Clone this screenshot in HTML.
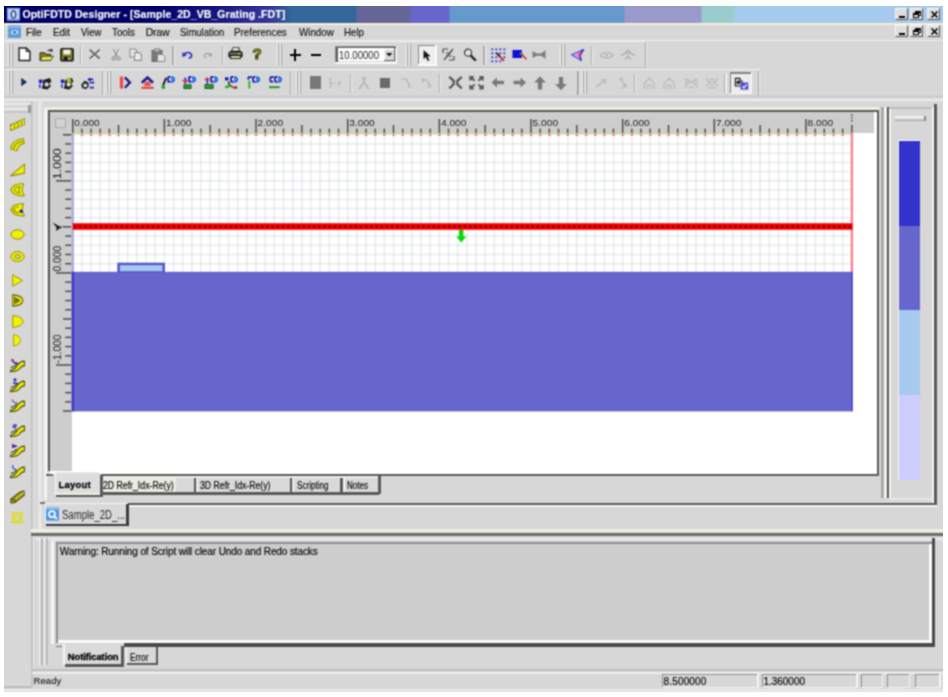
<!DOCTYPE html>
<html>
<head>
<meta charset="utf-8">
<title>OptiFDTD Designer</title>
<style>
html,body{margin:0;padding:0;}
body{width:948px;height:697px;background:#fff;overflow:hidden;position:relative;font-family:"Liberation Sans",sans-serif;font-size:10.5px;color:#111;}
.a{position:absolute;}
svg{position:absolute;overflow:visible;}
.wb{width:13px;height:12px;background:#dedede;box-sizing:border-box;border:1px solid;border-color:#fbf7ee #555 #555 #fbf7ee;}
.grip{width:2px;background:#f6f6f2;border-right:1px solid #8c8c8c;}
</style>
</head>
<body>
<svg width="0" height="0" style="position:absolute"><defs><filter id="soft" x="0" y="0" width="100%" height="100%" color-interpolation-filters="sRGB"><feConvolveMatrix order="3" kernelMatrix="1 2 1 2 5 2 1 2 1" divisor="17" edgeMode="duplicate" preserveAlpha="true"/></filter></defs></svg>
<div id="all" class="a" style="left:0;top:0;width:948px;height:697px;filter:url(#soft)">
<div class="a" style="left:0.0px;top:0.0px;width:948.0px;height:697.0px;background:#d7d7d7;"></div>
<div class="a" style="left:0px;top:0px;width:948px;height:22.5px;background:linear-gradient(to right,#000068 0px,#000068 150px,#14147c 215px,#2c2c94 250px,#333399 268px,#336699 292px,#336699 356px,#666699 357px,#666699 410px,#6666cc 411px,#6666cc 449px,#6699cc 450px,#6699cc 624px,#9999cc 625px,#9999cc 701px,#99cccc 702px,#99cccc 734px,#a6caf0 735px,#a6caf0 948px);"></div>
<div class="a" style="left:0.0px;top:22.9px;width:948.0px;height:1.9px;background:#f6eedc;"></div>
<span class="a" style="left:22.4px;top:7.4px;font-size:10.5px;line-height:14px;letter-spacing:0.07px;white-space:nowrap;color:#fff;-webkit-text-stroke:0.15px #fff;font-weight:bold;">OptiFDTD Designer - [Sample_2D_VB_Grating .FDT]</span>
<svg class="a" style="left:7px;top:8px" width="13" height="13" viewBox="0 0 13 13"><rect x="0" y="0" width="13" height="13" fill="#9cc4ea"/><rect x="1" y="1" width="11" height="11" fill="#c8def2" stroke="#7aa7d6" stroke-width="1"/><ellipse cx="6.5" cy="6.5" rx="2.3" ry="3.6" fill="none" stroke="#2a3f9a" stroke-width="1.4"/><rect x="0" y="11" width="13" height="2" fill="#6a58a8" opacity=".6"/></svg>
<svg class="a" style="left:8px;top:25px" width="13" height="13" viewBox="0 0 13 13"><rect x="0" y="0" width="13" height="13" fill="#5f9ede"/><rect x="0" y="0" width="13" height="3" fill="#86b6ea"/><path d="M3 7.5 C4 4.5 8 4 10.5 7 C9 10 5 10.5 3 7.5Z" fill="#e6eef8"/><circle cx="6.6" cy="7.2" r="1.7" fill="#2e86d0"/></svg>
<span class="a" style="left:26.4px;top:24.6px;font-size:10.5px;line-height:14px;letter-spacing:0.00px;white-space:nowrap;color:#111;-webkit-text-stroke:0.15px #111;transform:scaleX(0.9221);transform-origin:0 50%;">File</span>
<span class="a" style="left:52.9px;top:24.6px;font-size:10.5px;line-height:14px;letter-spacing:0.00px;white-space:nowrap;color:#111;-webkit-text-stroke:0.15px #111;transform:scaleX(0.9341);transform-origin:0 50%;">Edit</span>
<span class="a" style="left:80.8px;top:24.6px;font-size:10.5px;line-height:14px;letter-spacing:0.00px;white-space:nowrap;color:#111;-webkit-text-stroke:0.15px #111;transform:scaleX(0.8950);transform-origin:0 50%;">View</span>
<span class="a" style="left:112.0px;top:24.6px;font-size:10.5px;line-height:14px;letter-spacing:0.00px;white-space:nowrap;color:#111;-webkit-text-stroke:0.15px #111;transform:scaleX(0.9302);transform-origin:0 50%;">Tools</span>
<span class="a" style="left:145.7px;top:24.6px;font-size:10.5px;line-height:14px;letter-spacing:-0.20px;white-space:nowrap;color:#111;-webkit-text-stroke:0.15px #111;">Draw</span>
<span class="a" style="left:179.5px;top:24.6px;font-size:10.5px;line-height:14px;letter-spacing:0.00px;white-space:nowrap;color:#111;-webkit-text-stroke:0.15px #111;transform:scaleX(0.9037);transform-origin:0 50%;">Simulation</span>
<span class="a" style="left:234.3px;top:24.6px;font-size:10.5px;line-height:14px;letter-spacing:0.00px;white-space:nowrap;color:#111;-webkit-text-stroke:0.15px #111;transform:scaleX(0.9309);transform-origin:0 50%;">Preferences</span>
<span class="a" style="left:298.7px;top:24.6px;font-size:10.5px;line-height:14px;letter-spacing:0.00px;white-space:nowrap;color:#111;-webkit-text-stroke:0.15px #111;transform:scaleX(0.9319);transform-origin:0 50%;">Window</span>
<span class="a" style="left:344.0px;top:24.6px;font-size:10.5px;line-height:14px;letter-spacing:0.00px;white-space:nowrap;color:#111;-webkit-text-stroke:0.15px #111;transform:scaleX(0.9262);transform-origin:0 50%;">Help</span>
<div class="a wb" style="left:895px;top:8px"><i class="a" style="left:3px;top:7px;width:6px;height:2px;background:#000"></i></div>
<div class="a wb" style="left:910px;top:8px"><i class="a" style="left:4px;top:1.5px;width:6px;height:5px;border:1px solid #000;border-top-width:2px;box-sizing:border-box"></i><i class="a" style="left:2px;top:4px;width:6px;height:5px;border:1px solid #000;border-top-width:2px;box-sizing:border-box;background:#e8e8e8"></i></div>
<div class="a wb" style="left:927px;top:8px"><svg style="left:2.5px;top:2px" width="7" height="7" viewBox="0 0 7 7"><path d="M0.5 0.5L6.5 6.5M6.5 0.5L0.5 6.5" stroke="#000" stroke-width="1.6"/></svg></div>
<div class="a wb" style="left:895px;top:25px"><i class="a" style="left:3px;top:7px;width:6px;height:2px;background:#000"></i></div>
<div class="a wb" style="left:910px;top:25px"><i class="a" style="left:4px;top:1.5px;width:6px;height:5px;border:1px solid #000;border-top-width:2px;box-sizing:border-box"></i><i class="a" style="left:2px;top:4px;width:6px;height:5px;border:1px solid #000;border-top-width:2px;box-sizing:border-box;background:#e8e8e8"></i></div>
<div class="a wb" style="left:927px;top:25px"><svg style="left:2.5px;top:2px" width="7" height="7" viewBox="0 0 7 7"><path d="M0.5 0.5L6.5 6.5M6.5 0.5L0.5 6.5" stroke="#000" stroke-width="1.6"/></svg></div>
<div class="a" style="left:0.0px;top:39.5px;width:948.0px;height:1.5px;background:#ebebeb;"></div>
<div class="a" style="left:4.0px;top:40.6px;width:641.0px;height:1.4px;background:#efefef;"></div>
<div class="a" style="left:4.0px;top:66.6px;width:643.0px;height:1.4px;background:#c6c6c6;"></div>
<div class="a" style="left:4.0px;top:68.6px;width:756.0px;height:1.6px;background:#f0f0f0;"></div>
<div class="a" style="left:7.8px;top:43.7px;width:1.2px;height:22.1px;background:#fafaf6;"></div>
<div class="a" style="left:9.0px;top:43.7px;width:1.0px;height:22.1px;background:#9a9a9a;"></div>
<div class="a" style="left:10.8px;top:43.7px;width:1.2px;height:22.1px;background:#fafaf6;"></div>
<div class="a" style="left:12.0px;top:43.7px;width:1.0px;height:22.1px;background:#9a9a9a;"></div>
<svg class="a" style="left:18.2px;top:47.2px" width="13.0" height="14.5" viewBox="0 0 14 16"><path d="M1 1 L9 1 L13 5 L13 15 L1 15Z" fill="#fff" stroke="#222" stroke-width="1.6"/><path d="M9 1 L9 5 L13 5" fill="none" stroke="#222" stroke-width="1.3"/></svg>
<svg class="a" style="left:38.5px;top:47.5px" width="15.5" height="13.5" viewBox="0 0 16 14"><path d="M1 5 L6 5 L7 6.5 L12 6.5 L12 13 L1 13Z" fill="#8a8a20" stroke="#222" stroke-width="1"/><path d="M3.5 8.5 L15 8.5 L12 13 L1 13Z" fill="#e4e43c" stroke="#333" stroke-width="0.9"/><path d="M9 3.5 C10 1.5 12 1.2 13.2 2.6 M13.6 1 L13.4 3.2 L11.4 3" stroke="#222" stroke-width="1.1" fill="none"/></svg>
<svg class="a" style="left:59.5px;top:47.9px" width="14.0" height="13.6" viewBox="0 0 14 14"><rect x="0.8" y="0.8" width="12.4" height="12.4" rx="1" fill="#84841c" stroke="#111" stroke-width="1.6"/><rect x="3.3" y="1.6" width="7.2" height="5" fill="#f2f2f2"/><rect x="3.6" y="8.8" width="6.6" height="4" fill="#1a1a1a"/><rect x="8" y="9.6" width="1.6" height="2.6" fill="#f0f0f0"/></svg>
<div class="a" style="left:80.0px;top:46.0px;width:1.2px;height:19.0px;background:#adadad;"></div>
<div class="a" style="left:81.2px;top:46.0px;width:1.2px;height:19.0px;background:#f0f0ee;"></div>
<svg class="a" style="left:88.6px;top:49.2px" width="12.0" height="11.0" viewBox="0 0 12 11"><path d="M1.6 1.6 L11.6 10.6 M11.6 1.6 L1.6 10.6" stroke="#fff" stroke-width="1.5"/><path d="M0.8 0.8 L10.8 9.8 M10.8 0.8 L0.8 9.8" stroke="#6c6c6c" stroke-width="1.9"/></svg>
<svg class="a" style="left:110.8px;top:48.2px" width="10.5" height="13.0" viewBox="0 0 11 13"><path d="M2.6 1 L7 9 M8.4 1 L4 9" stroke="#fff" stroke-width="1.2" transform="translate(.8 .8)"/><path d="M2.6 1 L7 9 M8.4 1 L4 9" stroke="#8a8a8a" stroke-width="1.2"/><circle cx="3" cy="10.6" r="1.7" fill="none" stroke="#8a8a8a" stroke-width="1.1"/><circle cx="8" cy="10.6" r="1.7" fill="none" stroke="#8a8a8a" stroke-width="1.1"/></svg>
<svg class="a" style="left:129.0px;top:48.2px" width="13.0" height="13.0" viewBox="0 0 13 13"><path d="M1 1 L6 1 L8 3 L8 9 L1 9Z" fill="#e6e6e6" stroke="#8c8c8c" stroke-width="1.1"/><path d="M5.6 4.6 L10.4 4.6 L12.4 6.6 L12.4 12.4 L5.6 12.4Z" fill="#ededed" stroke="#8c8c8c" stroke-width="1.1"/></svg>
<svg class="a" style="left:150.5px;top:47.7px" width="15.0" height="14.0" viewBox="0 0 15 14"><rect x="1" y="2.4" width="10" height="11" fill="#787878" stroke="#6a6a6a"/><rect x="3.6" y="0.8" width="4.8" height="3" fill="#bdbdbd" stroke="#7c7c7c" stroke-width=".8"/><path d="M6.6 6.4 L11.6 6.4 L13.8 8.6 L13.8 13.4 L6.6 13.4Z" fill="#e8e8e8" stroke="#8a8a8a" stroke-width="1"/></svg>
<div class="a" style="left:172.4px;top:46.0px;width:1.2px;height:19.0px;background:#adadad;"></div>
<div class="a" style="left:173.6px;top:46.0px;width:1.2px;height:19.0px;background:#f0f0ee;"></div>
<svg class="a" style="left:180.6px;top:51.4px" width="12.5" height="7.6" viewBox="0 0 13 9"><path d="M2.5 4.2 C5 0.6 11.4 1 11.6 5.4 C11.6 7.4 10 8.4 8.2 8.4" fill="none" stroke="#2a2ab8" stroke-width="1.9"/><path d="M0.4 1.4 L1 7 L6.2 5Z" fill="#2a2ab8"/></svg>
<svg class="a" style="left:201.7px;top:52.0px" width="11.5" height="6.4" viewBox="0 0 12 9"><path d="M9.6 4.2 C7.4 1 1.4 1.2 1.2 5.2 C1.2 7 2.6 8 4.2 8" fill="none" stroke="#9a9a9a" stroke-width="1.5"/><path d="M11.7 1.4 L11.2 6.8 L6.4 4.8Z" fill="#9a9a9a"/></svg>
<div class="a" style="left:222.0px;top:46.0px;width:1.2px;height:19.0px;background:#adadad;"></div>
<div class="a" style="left:223.2px;top:46.0px;width:1.2px;height:19.0px;background:#f0f0ee;"></div>
<svg class="a" style="left:228.4px;top:47.4px" width="15.5" height="12.5" viewBox="0 0 17 14"><path d="M4 5 L5.2 0.8 L12.6 0.8 L11.6 5Z" fill="#f4f4f4" stroke="#222" stroke-width="1"/><path d="M0.8 6.4 L3 4.6 L14 4.6 L15.6 6.4 L15.6 11 L0.8 11Z" fill="#3a3a34" stroke="#111" stroke-width="1.1"/><path d="M2 7.4 H12" stroke="#9a9a8a" stroke-width="1"/><rect x="2.6" y="9.6" width="11" height="3.4" fill="#d8d4a8" stroke="#111" stroke-width="1"/><rect x="11.4" y="6.8" width="2.4" height="1.5" fill="#e8e040"/></svg>
<span class="a" style="left:252.4px;top:45.4px;font-size:15px;line-height:18px;font-weight:bold;color:#e4e410;-webkit-text-stroke:1px #2a2a08;">?</span>
<div class="a" style="left:277.0px;top:43.7px;width:1.2px;height:22.1px;background:#fafaf6;"></div>
<div class="a" style="left:278.2px;top:43.7px;width:1.0px;height:22.1px;background:#9a9a9a;"></div>
<div class="a" style="left:280.0px;top:43.7px;width:1.2px;height:22.1px;background:#fafaf6;"></div>
<div class="a" style="left:281.2px;top:43.7px;width:1.0px;height:22.1px;background:#9a9a9a;"></div>
<div class="a" style="left:289.6px;top:53.6px;width:11.4px;height:2.4px;background:#000;"></div>
<div class="a" style="left:294.1px;top:49.0px;width:2.4px;height:11.6px;background:#000;"></div>
<div class="a" style="left:311.0px;top:53.6px;width:10.0px;height:2.4px;background:#000;"></div>
<div class="a" style="left:335.0px;top:45.6px;width:62.0px;height:18.0px;background:#f8f8f4;"></div>
<div class="a" style="left:335.0px;top:45.6px;width:60.8px;height:16.8px;background:#8c8c8c;"></div>
<div class="a" style="left:336.3px;top:46.9px;width:59.5px;height:15.5px;background:#606060;"></div>
<div class="a" style="left:337.6px;top:48.2px;width:58.2px;height:14.2px;background:#d7d7d7;"></div>
<div class="a" style="left:337.6px;top:48.2px;width:57.2px;height:13.2px;background:#fff;"></div>
<span class="a" style="left:338.6px;top:47.8px;font-size:10.5px;line-height:14px;letter-spacing:0.00px;white-space:nowrap;color:#222;-webkit-text-stroke:0px #222;transform:scaleX(0.9134);transform-origin:0 50%;">10.00000</span>
<div class="a" style="left:383.6px;top:48.4px;width:11.2px;height:13.0px;background:#d9d9d9;"></div>
<div class="a" style="left:383.6px;top:48.4px;width:10.4px;height:1.2px;background:#f8f8f4;"></div>
<div class="a" style="left:383.6px;top:48.4px;width:1.2px;height:12.6px;background:#f8f8f4;"></div>
<div class="a" style="left:393.6px;top:48.4px;width:1.2px;height:13.0px;background:#666;"></div>
<div class="a" style="left:383.6px;top:60.2px;width:11.2px;height:1.2px;background:#666;"></div>
<svg class="a" style="left:386px;top:53.2px" width="6.4" height="3.6" viewBox="0 0 7 4"><path d="M0 0 L7 0 L3.5 4Z" fill="#111"/></svg>
<div class="a" style="left:406.0px;top:43.7px;width:1.2px;height:22.1px;background:#fafaf6;"></div>
<div class="a" style="left:407.2px;top:43.7px;width:1.0px;height:22.1px;background:#9a9a9a;"></div>
<div class="a" style="left:409.0px;top:43.7px;width:1.2px;height:22.1px;background:#fafaf6;"></div>
<div class="a" style="left:410.2px;top:43.7px;width:1.0px;height:22.1px;background:#9a9a9a;"></div>
<div class="a" style="left:417.5px;top:44.6px;width:19.3px;height:21.0px;background:#fbfbf8;"></div>
<div class="a" style="left:417.5px;top:44.6px;width:17.9px;height:19.6px;background:#8a8a8a;"></div>
<div class="a" style="left:418.8px;top:45.9px;width:16.6px;height:18.3px;background:#efefef;"></div>
<svg class="a" style="left:423.4px;top:48.9px" width="8.5" height="13.0" viewBox="0 0 9 13"><path d="M0.6 0.6 L0.6 10.4 L3 8.2 L5 12.4 L6.8 11.6 L4.8 7.6 L8 7.4Z" fill="#111"/></svg>
<svg class="a" style="left:441.5px;top:48.1px" width="13.0" height="13.0" viewBox="0 0 13 13"><path d="M1 1 H6 M1 1 V5 M12 12 H7 M12 12 V8 M2 12 L11 1 M4 5 H9 M4 8 H10" stroke="#4a4a4a" stroke-width="1.2" fill="none"/></svg>
<svg class="a" style="left:463.0px;top:48.0px" width="14.0" height="13.6" viewBox="0 0 14 14"><circle cx="5" cy="4.8" r="3.6" fill="#dfe6ee" stroke="#3a3a3a" stroke-width="1.3"/><path d="M7.6 7.6 L13 13" stroke="#222" stroke-width="2.4"/></svg>
<div class="a" style="left:483.4px;top:46.0px;width:1.2px;height:19.0px;background:#adadad;"></div>
<div class="a" style="left:484.6px;top:46.0px;width:1.2px;height:19.0px;background:#f0f0ee;"></div>
<svg class="a" style="left:490.5px;top:47.8px" width="14.0" height="14.0" viewBox="0 0 14 14"><rect x="0.4" y="0.4" width="1.8" height="1.8" fill="#3030d0"/><rect x="0.4" y="4.4" width="1.8" height="1.8" fill="#3030d0"/><rect x="0.4" y="8.4" width="1.8" height="1.8" fill="#3030d0"/><rect x="0.4" y="12.4" width="1.8" height="1.8" fill="#3030d0"/><rect x="4.4" y="0.4" width="1.8" height="1.8" fill="#3030d0"/><rect x="4.4" y="4.4" width="1.8" height="1.8" fill="#3030d0"/><rect x="4.4" y="8.4" width="1.8" height="1.8" fill="#3030d0"/><rect x="4.4" y="12.4" width="1.8" height="1.8" fill="#3030d0"/><rect x="8.4" y="0.4" width="1.8" height="1.8" fill="#3030d0"/><rect x="8.4" y="4.4" width="1.8" height="1.8" fill="#3030d0"/><rect x="8.4" y="12.4" width="1.8" height="1.8" fill="#3030d0"/><rect x="12.4" y="0.4" width="1.8" height="1.8" fill="#3030d0"/><rect x="12.4" y="4.4" width="1.8" height="1.8" fill="#3030d0"/><rect x="12.4" y="8.4" width="1.8" height="1.8" fill="#3030d0"/><path d="M6.4 6 L13 12.8" stroke="#d02020" stroke-width="1.8"/><path d="M5.4 4.8 L8.8 8.4" stroke="#222" stroke-width="1.6"/></svg>
<svg class="a" style="left:511.8px;top:48.6px" width="15.5" height="11.5" viewBox="0 0 16 12"><rect x="0.4" y="1" width="9.8" height="8.4" fill="#1010d8"/><circle cx="9.4" cy="5" r="1.6" fill="#20a040"/><path d="M10 5.4 L15 10.6" stroke="#d02020" stroke-width="1.6"/></svg>
<svg class="a" style="left:531.8px;top:48.9px" width="14.5" height="11.0" viewBox="0 0 15 11"><path d="M0.6 2 L5 4.4 L9.6 4.4 L14 0.8 L14 10.2 L9.6 6.8 L5 6.8 L0.6 9Z" fill="#7c7c7c"/></svg>
<div class="a" style="left:560.0px;top:43.7px;width:1.2px;height:22.1px;background:#fafaf6;"></div>
<div class="a" style="left:561.2px;top:43.7px;width:1.0px;height:22.1px;background:#9a9a9a;"></div>
<div class="a" style="left:563.0px;top:43.7px;width:1.2px;height:22.1px;background:#fafaf6;"></div>
<div class="a" style="left:564.2px;top:43.7px;width:1.0px;height:22.1px;background:#9a9a9a;"></div>
<svg class="a" style="left:570.6px;top:48.9px" width="13.5" height="12.6" viewBox="0 0 14 13"><path d="M0.6 6 L13 0.6 L9 6.4 L10.6 12 Z" fill="#e69ad8" stroke="#4a4ad8" stroke-width="1.1" stroke-linejoin="round"/><path d="M13 0.6 L9 6.4 L10.6 12" fill="none" stroke="#3838d0" stroke-width="1.8"/><circle cx="9.4" cy="5.6" r="1.5" fill="#e03030"/></svg>
<div class="a" style="left:591.0px;top:46.0px;width:1.2px;height:19.0px;background:#adadad;"></div>
<div class="a" style="left:592.2px;top:46.0px;width:1.2px;height:19.0px;background:#f0f0ee;"></div>
<svg class="a" style="left:599.2px;top:50.5px" width="15.5" height="8.5" viewBox="0 0 16 9"><path d="M1 5 C4 0.6 11.6 0.6 14.6 5 C11.6 8 4 8 1 5Z" fill="none" stroke="#b4b4b4" stroke-width="1.5"/><circle cx="7.8" cy="4.6" r="1.5" fill="#b4b4b4"/></svg>
<svg class="a" style="left:620.0px;top:49.1px" width="16.0" height="11.0" viewBox="0 0 16 11"><path d="M1 7 C4 3 12 3 15 7 M8 0.8 L4 5.2 M8 0.8 L12 5.2 M5 10.4 L8 7 L11 10.4" fill="none" stroke="#b4b4b4" stroke-width="1.5"/></svg>
<div class="a" style="left:644.6px;top:43.0px;width:1.2px;height:24.4px;background:#a6a6a6;"></div>
<div class="a" style="left:645.8px;top:43.0px;width:1.2px;height:24.4px;background:#ececec;"></div>
<div class="a" style="left:7.8px;top:71.0px;width:1.2px;height:23.3px;background:#fafaf6;"></div>
<div class="a" style="left:9.0px;top:71.0px;width:1.0px;height:23.3px;background:#9a9a9a;"></div>
<div class="a" style="left:10.8px;top:71.0px;width:1.2px;height:23.3px;background:#fafaf6;"></div>
<div class="a" style="left:12.0px;top:71.0px;width:1.0px;height:23.3px;background:#9a9a9a;"></div>
<svg class="a" style="left:21.3px;top:78.4px" width="6.2" height="8.6" viewBox="0 0 6 9"><path d="M0 0 L6 4.3 L0 8.6Z" fill="#14146e"/><path d="M0 1.6 L2.4 4.3 L0 7Z" fill="#1a7a4a"/></svg>
<svg class="a" style="left:38.4px;top:76.5px" width="14.5" height="13.0" viewBox="0 0 14 13"><path d="M5 3 L11.6 1 L13.2 4.4 L11 6.4 L12.6 9.2 L9 12.6 L3.4 11.4 L4.6 8 Z" fill="#1c1c1c"/><circle cx="8.4" cy="7.4" r="2.2" fill="#cfd6ee"/><rect x="0.6" y="2.6" width="3.6" height="3.4" fill="#1a1ac0"/><path d="M1.6 7 V11" stroke="#3a3ad8" stroke-width="1.6"/></svg>
<svg class="a" style="left:59.5px;top:76.5px" width="14.5" height="13.0" viewBox="0 0 14 13"><path d="M5 3 L11.6 1 L13.2 4.4 L11 6.4 L12.6 9.2 L9 12.6 L3.4 11.4 L4.6 8 Z" fill="#1c1c1c"/><circle cx="8.4" cy="7.4" r="2.2" fill="#cfd6ee"/><rect x="0.6" y="2.6" width="3.6" height="3.4" fill="#1a1ac0"/><path d="M1.6 7 V11" stroke="#3a3ad8" stroke-width="1.6"/><path d="M6 1.4 L10 0.6 L11.4 5 L7 6.6Z" fill="#b4b42a"/></svg>
<svg class="a" style="left:79.8px;top:76.5px" width="14.5" height="13.0" viewBox="0 0 14 13"><path d="M1 7.6 L4.6 3.4 L8 5.4 L8.6 9.4 L5.6 12.2 L1.8 11Z" fill="#222"/><circle cx="5" cy="8.4" r="1.9" fill="#d8d8e8"/><path d="M7.6 2.4 H13 M9.2 5.6 H14 M9.6 10.6 H13.6 M9.4 1 V4" stroke="#2020b8" stroke-width="1.8"/></svg>
<div class="a" style="left:102.0px;top:71.0px;width:1.2px;height:23.5px;background:#a6a6a6;"></div>
<div class="a" style="left:103.2px;top:71.0px;width:1.2px;height:23.5px;background:#ececec;"></div>
<div class="a" style="left:105.7px;top:71.0px;width:1.2px;height:23.3px;background:#fafaf6;"></div>
<div class="a" style="left:106.9px;top:71.0px;width:1.0px;height:23.3px;background:#9a9a9a;"></div>
<div class="a" style="left:108.7px;top:71.0px;width:1.2px;height:23.3px;background:#fafaf6;"></div>
<div class="a" style="left:109.9px;top:71.0px;width:1.0px;height:23.3px;background:#9a9a9a;"></div>
<svg class="a" style="left:119.2px;top:75.7px" width="14.5" height="13.5" viewBox="0 0 14 14"><rect x="0.4" y="0.6" width="3.4" height="12.4" fill="#f04848"/><path d="M5.6 1.4 L10.8 6.8 L5.6 12.2" fill="none" stroke="#1c1c8c" stroke-width="2.5"/></svg>
<svg class="a" style="left:139.8px;top:75.7px" width="14.5" height="13.5" viewBox="0 0 14 14"><path d="M1.4 7 L7.2 1.6 L13 7" fill="none" stroke="#1c1c8c" stroke-width="2.8"/><path d="M4 9 H10.4 M1 12.2 H13.6" stroke="#e83838" stroke-width="2.2"/><path d="M4.6 6.8 H10" stroke="#e83838" stroke-width="1.6"/></svg>
<svg class="a" style="left:160.8px;top:75.8px" width="14.5" height="13.5" viewBox="0 0 15 14"><rect x="6.4" y="0.4" width="8.4" height="6.6" rx="1.5" fill="#e8f6ff"/><path d="M7 1 H9.8 M7.4 1 V6 M7 6 H10" stroke="#2020b8" stroke-width="2" fill="none"/><path d="M11.2 0.8 V6.4 C15 6.2 15 1 11.2 0.8Z" fill="#30c0f0" stroke="#2848d0" stroke-width="1.2"/><path d="M5.4 2 L2 10" stroke="#111" stroke-width="1.9"/><circle cx="2.4" cy="11.6" r="1.9" fill="#14a82a"/></svg>
<svg class="a" style="left:181.8px;top:75.8px" width="14.5" height="13.5" viewBox="0 0 15 14"><rect x="6.4" y="0.4" width="8.4" height="6.6" rx="1.5" fill="#e8f6ff"/><path d="M7 1 H9.8 M7.4 1 V6 M7 6 H10" stroke="#2020b8" stroke-width="2" fill="none"/><path d="M11.2 0.8 V6.4 C15 6.2 15 1 11.2 0.8Z" fill="#30c0f0" stroke="#2848d0" stroke-width="1.2"/><path d="M3.4 1.6 V8" stroke="#2a2ab8" stroke-width="1.8"/><path d="M0.6 5 H6" stroke="#e03030" stroke-width="1.8"/><rect x="2" y="9.2" width="7.4" height="3.8" fill="#10b020" stroke="#222" stroke-width=".8"/></svg>
<svg class="a" style="left:203.8px;top:75.8px" width="14.5" height="13.5" viewBox="0 0 15 14"><rect x="6.4" y="0.4" width="8.4" height="6.6" rx="1.5" fill="#e8f6ff"/><path d="M7 1 H9.8 M7.4 1 V6 M7 6 H10" stroke="#2020b8" stroke-width="2" fill="none"/><path d="M11.2 0.8 V6.4 C15 6.2 15 1 11.2 0.8Z" fill="#30c0f0" stroke="#2848d0" stroke-width="1.2"/><path d="M3.4 1.6 V8" stroke="#2a2ab8" stroke-width="1.8"/><path d="M0.8 3.6 H5.6" stroke="#e03030" stroke-width="1.6"/><rect x="1" y="9" width="8.4" height="4" fill="#10b020" stroke="#222" stroke-width=".8"/></svg>
<svg class="a" style="left:224.3px;top:75.8px" width="14.5" height="13.5" viewBox="0 0 15 14"><rect x="6.4" y="0.4" width="8.4" height="6.6" rx="1.5" fill="#e8f6ff"/><path d="M7 1 H9.8 M7.4 1 V6 M7 6 H10" stroke="#2020b8" stroke-width="2" fill="none"/><path d="M11.2 0.8 V6.4 C15 6.2 15 1 11.2 0.8Z" fill="#30c0f0" stroke="#2848d0" stroke-width="1.2"/><rect x="1" y="1.4" width="3.6" height="3.2" fill="#1a1a9c"/><path d="M5 5.6 V9" stroke="#222" stroke-width="1.6"/><path d="M0.8 11 L7 8.2 L8 10.6 L2 13Z" fill="#10b020"/><path d="M7 10.4 L11 12.6" stroke="#e02828" stroke-width="2"/><rect x="11" y="10.6" width="2.6" height="2.6" fill="#444"/></svg>
<svg class="a" style="left:246.3px;top:75.8px" width="14.5" height="13.5" viewBox="0 0 15 14"><rect x="6.4" y="0.4" width="8.4" height="6.6" rx="1.5" fill="#e8f6ff"/><path d="M7 1 H9.8 M7.4 1 V6 M7 6 H10" stroke="#2020b8" stroke-width="2" fill="none"/><path d="M11.2 0.8 V6.4 C15 6.2 15 1 11.2 0.8Z" fill="#30c0f0" stroke="#2848d0" stroke-width="1.2"/><path d="M2.2 1.2 H6 M2.4 1.2 V4" stroke="#1a1a9c" stroke-width="1.7" fill="none"/><path d="M3.4 5 V13" stroke="#18b030" stroke-width="1.8"/></svg>
<svg class="a" style="left:267.8px;top:75.8px" width="14.5" height="13.5" viewBox="0 0 15 14"><rect x="6.4" y="0.4" width="8.4" height="6.6" rx="1.5" fill="#e8f6ff"/><path d="M7 1 H9.8 M7.4 1 V6 M7 6 H10" stroke="#2020b8" stroke-width="2" fill="none"/><path d="M11.2 0.8 V6.4 C15 6.2 15 1 11.2 0.8Z" fill="#30c0f0" stroke="#2848d0" stroke-width="1.2"/><path d="M2.2 1.2 H6 M2.4 1.2 V5.6 M2.2 5.8 H5.4" stroke="#1a1a9c" stroke-width="1.7" fill="none"/><path d="M1 11.6 H12" stroke="#109828" stroke-width="2"/></svg>
<div class="a" style="left:289.6px;top:71.0px;width:1.2px;height:23.5px;background:#a6a6a6;"></div>
<div class="a" style="left:290.8px;top:71.0px;width:1.2px;height:23.5px;background:#ececec;"></div>
<div class="a" style="left:296.0px;top:71.0px;width:1.2px;height:23.3px;background:#fafaf6;"></div>
<div class="a" style="left:297.2px;top:71.0px;width:1.0px;height:23.3px;background:#9a9a9a;"></div>
<div class="a" style="left:299.0px;top:71.0px;width:1.2px;height:23.3px;background:#fafaf6;"></div>
<div class="a" style="left:300.2px;top:71.0px;width:1.0px;height:23.3px;background:#9a9a9a;"></div>
<div class="a" style="left:310.0px;top:76.4px;width:10.8px;height:12.6px;background:#787878;"></div>
<svg class="a" style="left:329.0px;top:76.5px" width="14.0" height="13.0" viewBox="0 0 14 13"><path d="M1.4 1 V12 M1.4 6.5 H6.4 M8.6 6.5 H12.6 M10.6 4.4 V8.6" stroke="#b2b2b2" stroke-width="1.5" stroke-dasharray="2.4 1.2" fill="none"/></svg>
<div class="a" style="left:349.8px;top:74.0px;width:1.2px;height:19.0px;background:#adadad;"></div>
<div class="a" style="left:351.0px;top:74.0px;width:1.2px;height:19.0px;background:#f0f0ee;"></div>
<svg class="a" style="left:357.8px;top:76.5px" width="11.5" height="13.0" viewBox="0 0 11 13"><path d="M3.6 1 H8 M5.8 1 V5 M5.8 5 L1 12 M5.8 5 L10.4 12" stroke="#b2b2b2" stroke-width="1.5" fill="none"/></svg>
<div class="a" style="left:379.6px;top:77.8px;width:10.6px;height:10.6px;background:#6a6a6a;"></div>
<div class="a" style="left:439.0px;top:74.0px;width:1.2px;height:19.0px;background:#adadad;"></div>
<div class="a" style="left:440.2px;top:74.0px;width:1.2px;height:19.0px;background:#f0f0ee;"></div>
<svg class="a" style="left:399.8px;top:77.0px" width="11.5" height="12.0" viewBox="0 0 11 12"><path d="M1 2 H6 L10 10 M6.6 2 V5 M8.6 7 V11" stroke="#bcbcbc" stroke-width="1.5" fill="none"/></svg>
<svg class="a" style="left:421.1px;top:77.0px" width="11.5" height="12.0" viewBox="0 0 11 12"><path d="M1.6 1 V6 M1.6 3 H5 L10 10 M7.6 6 V11" stroke="#bcbcbc" stroke-width="1.5" fill="none"/></svg>
<svg class="a" style="left:447.7px;top:76.2px" width="15.0" height="13.5" viewBox="0 0 15 14"><path d="M1 0.8 L5.6 5 L5.6 8.6 L1 12.8 M14 0.8 L9.4 5 L9.4 8.6 L14 12.8" stroke="#5c5c5c" stroke-width="2.5" fill="none"/></svg>
<svg class="a" style="left:469.0px;top:76.2px" width="15.0" height="13.5" viewBox="0 0 15 14"><path d="M1.2 1.2 L5.6 5 M13.8 1.2 L9.4 5 M1.2 12.6 L5.6 8.8 M13.8 12.6 L9.4 8.8 M1 4.6 V1 H4.6 M10.4 1 H14 V4.6 M1 9.4 V13 H4.6 M10.4 13 H14 V9.4" stroke="#5c5c5c" stroke-width="2" fill="none"/></svg>
<svg class="a" style="left:491.4px;top:77.2px" width="13.5" height="11.5" viewBox="0 0 13 10"><path d="M0.4 4.75 L5.8 0 L5.8 3 L12.5 3 L12.5 6.5 L5.8 6.5 L5.8 9.5Z" fill="#7a7a7a"/></svg>
<svg class="a" style="left:512.8px;top:77.2px" width="13.5" height="11.5" viewBox="0 0 13 10"><path d="M12.6 4.75 L7.2 0 L7.2 3 L0.5 3 L0.5 6.5 L7.2 6.5 L7.2 9.5Z" fill="#7a7a7a"/></svg>
<svg class="a" style="left:533.5px;top:76.0px" width="12.5" height="13.5" viewBox="0 0 12 13"><path d="M5.75 0.3 L11.4 6.2 L7.8 6.2 L7.8 13 L3.7 13 L3.7 6.2 L0.1 6.2Z" fill="#7a7a7a"/></svg>
<svg class="a" style="left:555.2px;top:76.5px" width="12.5" height="13.5" viewBox="0 0 12 13"><path d="M5.75 12.8 L11.4 6.8 L7.8 6.8 L7.8 0 L3.7 0 L3.7 6.8 L0.1 6.8Z" fill="#7a7a7a"/></svg>
<div class="a" style="left:577.4px;top:71.0px;width:1.2px;height:23.5px;background:#a6a6a6;"></div>
<div class="a" style="left:578.6px;top:71.0px;width:1.2px;height:23.5px;background:#ececec;"></div>
<div class="a" style="left:582.0px;top:71.0px;width:1.2px;height:23.3px;background:#fafaf6;"></div>
<div class="a" style="left:583.2px;top:71.0px;width:1.0px;height:23.3px;background:#9a9a9a;"></div>
<div class="a" style="left:585.0px;top:71.0px;width:1.2px;height:23.3px;background:#fafaf6;"></div>
<div class="a" style="left:586.2px;top:71.0px;width:1.0px;height:23.3px;background:#9a9a9a;"></div>
<svg class="a" style="left:594.5px;top:78.0px" width="12.0" height="10.0" viewBox="0 0 12 10"><path d="M1 9 L9 3 M6 2 L10.6 1.6 L10 6" stroke="#bdbdbd" stroke-width="1.6" fill="none"/></svg>
<svg class="a" style="left:616.5px;top:77.0px" width="10.0" height="12.0" viewBox="0 0 10 12"><path d="M2 1.6 H6 M4 1.6 L8 9.6 M5 10.8 L8.6 10.2 L8.4 6.4" stroke="#bdbdbd" stroke-width="1.6" fill="none"/></svg>
<div class="a" style="left:634.0px;top:74.0px;width:1.2px;height:19.0px;background:#adadad;"></div>
<div class="a" style="left:635.2px;top:74.0px;width:1.2px;height:19.0px;background:#f0f0ee;"></div>
<svg class="a" style="left:642.8px;top:76.5px" width="12.5" height="13.0" viewBox="0 0 13 13"><path d="M1.4 12.6 V6 M1.4 6 L6.5 1 L11.6 6 M11.6 6 V12.6 M4.6 12.6 V8.4 H8.4 V12.6" stroke="#bdbdbd" stroke-width="1.4" fill="none"/></svg>
<svg class="a" style="left:663.2px;top:76.5px" width="12.5" height="13.0" viewBox="0 0 13 13"><path d="M1.4 12.6 V6 M1.4 6 L6.5 1 L11.6 6 M11.6 6 V12.6 M4.6 12.6 V8.4 H8.4 V12.6" stroke="#bdbdbd" stroke-width="1.4" fill="none"/></svg>
<svg class="a" style="left:684.8px;top:77.0px" width="12.5" height="12.0" viewBox="0 0 13 12"><path d="M1 1 V11 M1 2 L6 5 L1 8 M12 1 V11 M12 2 L7 5 L12 8 M4 10.6 H9" stroke="#bdbdbd" stroke-width="1.4" fill="none"/></svg>
<svg class="a" style="left:705.0px;top:77.0px" width="14.0" height="12.0" viewBox="0 0 14 12"><path d="M1 1 L5 5 L1 9 M13 1 L9 5 L13 9 M3 5 H11 M2 11 H12 M5 2 H9 M5 8 H9" stroke="#bdbdbd" stroke-width="1.4" fill="none"/></svg>
<div class="a" style="left:724.2px;top:74.0px;width:1.2px;height:19.0px;background:#adadad;"></div>
<div class="a" style="left:725.4px;top:74.0px;width:1.2px;height:19.0px;background:#f0f0ee;"></div>
<div class="a" style="left:730.0px;top:72.2px;width:22.0px;height:22.2px;background:#fbfbf8;"></div>
<div class="a" style="left:730.0px;top:72.2px;width:20.6px;height:20.8px;background:#858585;"></div>
<div class="a" style="left:731.3px;top:73.5px;width:19.3px;height:19.5px;background:#ececec;"></div>
<svg class="a" style="left:733.5px;top:76.9px" width="15.0" height="13.0" viewBox="0 0 15 13"><path d="M1.4 1.4 H6 V4 H8 V9 H1.4Z" fill="#e4e4e4" stroke="#222" stroke-width="1.2"/><circle cx="4.4" cy="5.4" r="1.9" fill="#222"/><rect x="6.6" y="5.6" width="7.6" height="7" fill="#4646d8"/><path d="M8.4 9.2 L10 11 L12.8 7.4" stroke="#eef" stroke-width="1.4" fill="none"/></svg>
<div class="a" style="left:757.6px;top:71.0px;width:1.2px;height:24.5px;background:#a6a6a6;"></div>
<div class="a" style="left:758.8px;top:71.0px;width:1.2px;height:24.5px;background:#ececec;"></div>
<div class="a" style="left:4.0px;top:103.0px;width:26.5px;height:2.4px;background:#e9e9e9;"></div>
<div class="a" style="left:4.0px;top:108.0px;width:26.5px;height:2.0px;background:#ebebeb;"></div>
<div class="a" style="left:4.0px;top:111.2px;width:26.5px;height:1.4px;background:#c6c6c6;"></div>
<div class="a" style="left:28.0px;top:104.6px;width:3.0px;height:8.4px;background:#9a9a9a;"></div>
<div class="a" style="left:30.8px;top:101.0px;width:1.8px;height:585.0px;background:#c4c4c4;"></div>
<div class="a" style="left:32.6px;top:101.0px;width:1.4px;height:568.0px;background:#e6e6e6;"></div>
<div class="a" style="left:38.0px;top:101.0px;width:3.6px;height:428.0px;background:#e6e6e6;"></div>
<div class="a" style="left:44.4px;top:107.0px;width:2.4px;height:393.0px;background:#f4f4f2;"></div>
<svg class="a" style="left:9.6px;top:117.5px" width="15" height="13.5" viewBox="0 0 15 13" preserveAspectRatio="none"><path d="M0.6 6.6 L14.4 0.8 L14.4 6.2 L0.6 12.2Z" fill="#f2f200" stroke="#55552a" stroke-width="1.1" stroke-dasharray="1.6 1.2"/><path d="M4.2 5.4 l0.4 5 M7.8 3.8 l0.4 5 M11.2 2.4 l0.4 5" stroke="#8a8a10" stroke-width="1.1"/></svg>
<svg class="a" style="left:9.6px;top:137.8px" width="15" height="13.5" viewBox="0 0 15 13" preserveAspectRatio="none"><path d="M0.6 10.4 C1.4 4.6 7 0.8 13.4 0.8 L14.2 5.2 C10 5.6 7.8 8 6.8 12.4Z" fill="#f2f200" stroke="#8a8a10" stroke-width="1" stroke-linejoin="round"/><path d="M3.4 10.6 C4.4 6.4 8 3.6 13 3.2" fill="none" stroke="#8a8a10" stroke-width="1.1"/></svg>
<svg class="a" style="left:9.6px;top:162.7px" width="15" height="13.5" viewBox="0 0 15 13" preserveAspectRatio="none"><path d="M0.5 12.4 L14.4 1 L14.4 9.8Z" fill="#f2f200" stroke="#8a8a10" stroke-width="1" stroke-linejoin="round"/></svg>
<svg class="a" style="left:9.6px;top:183.2px" width="15" height="13.5" viewBox="0 0 15 13" preserveAspectRatio="none"><path d="M0.8 6.5 C3 1.5 8 0.5 13.5 0.8 L12 6.5 L14.2 12.4 C8 12.6 3 11.5 0.8 6.5Z" fill="#f2f200" stroke="#8a8a10" stroke-width="1" stroke-linejoin="round"/><path d="M4 6.5 C6 4 8 3.2 10 3.4 L8.6 6.5 L10 9.6 C8 9.8 6 9 4 6.5Z" fill="none" stroke="#8a8a10" stroke-width="1.1"/></svg>
<svg class="a" style="left:9.6px;top:203.4px" width="15" height="13.5" viewBox="0 0 15 13" preserveAspectRatio="none"><path d="M0.8 6.5 C3 1.5 8 0.5 13.5 0.8 L12 6.5 L14.2 12.4 C8 12.6 3 11.5 0.8 6.5Z" fill="#f2f200" stroke="#8a8a10" stroke-width="1" stroke-linejoin="round"/><path d="M3 6.5 C5 4.5 7 3.5 9 3.4 M3 6.5 C5 8.5 7 9.6 9 9.8" fill="none" stroke="#8a8a10" stroke-width="1.1"/><circle cx="11.2" cy="8" r="1.7" fill="#1a1aa0"/></svg>
<svg class="a" style="left:9.6px;top:228.2px" width="15" height="13" viewBox="0 0 15 13" preserveAspectRatio="none"><ellipse cx="7.5" cy="6.5" rx="6.6" ry="4.6" fill="#f2f200" stroke="#8a8a10" stroke-width="1" stroke-linejoin="round"/></svg>
<svg class="a" style="left:9.6px;top:249.5px" width="15" height="13" viewBox="0 0 15 13" preserveAspectRatio="none"><ellipse cx="7.5" cy="6.5" rx="6.6" ry="4.9" fill="#f2f200" stroke="#8a8a10" stroke-width="1" stroke-linejoin="round"/><ellipse cx="7.5" cy="6.5" rx="3" ry="2" fill="#d8d0a0" stroke="#8a8a10" stroke-width="1"/></svg>
<svg class="a" style="left:11.6px;top:274.0px" width="11.4" height="13" viewBox="0 0 15 13" preserveAspectRatio="none"><path d="M1 0.8 L14 6.5 L1 12.2Z" fill="#f2f200" stroke="#8a8a10" stroke-width="1" stroke-linejoin="round"/></svg>
<svg class="a" style="left:11.6px;top:293.8px" width="11.6" height="13" viewBox="0 0 15 13" preserveAspectRatio="none"><path d="M1 0.8 C9 1 14 3.5 14.2 6.5 C14 9.5 9 12 1 12.2Z" fill="#f2f200" stroke="#5a5a10" stroke-width="1.3"/><path d="M3.5 3.6 L9.5 6.5 L3.5 9.4Z M3.5 6.5 H9" fill="none" stroke="#5a5a10" stroke-width="1.4"/></svg>
<svg class="a" style="left:11.6px;top:314.5px" width="11.6" height="13" viewBox="0 0 15 13" preserveAspectRatio="none"><path d="M1 0.6 C10 1 14.2 4 14.2 6.5 C14.2 9 10 12 1 12.4Z" fill="#f2f200" stroke="#8a8a10" stroke-width="1" stroke-linejoin="round"/></svg>
<svg class="a" style="left:12.6px;top:334.3px" width="8" height="12.6" viewBox="0 0 15 13" preserveAspectRatio="none"><path d="M1 0.8 C10 1 14 4 14 6.5 C14 9 10 12 1 12.2Z" fill="#f2f200" stroke="#8a8a10" stroke-width="1" stroke-linejoin="round"/></svg>
<svg class="a" style="left:9.6px;top:358.1px" width="15" height="13.5" viewBox="0 0 15 13" preserveAspectRatio="none"><path d="M0.6 11.6 C5 11.6 6 9 7.4 7 C9 4.8 10 3.2 14.4 3 L14.4 7.4 C11.4 7.6 10.6 9 9.2 10.6 C7.8 12.4 6 13.2 0.6 13.2Z" fill="#f2f200" stroke="#4a4a10" stroke-width="1.1" stroke-linejoin="round"/><path d="M0.8 9 C4 8.8 5.4 7.6 6.8 5.6" fill="none" stroke="#55551a" stroke-width="1.2"/><circle cx="2.5" cy="2.2" r="1.5" fill="#d03030"/><path d="M3 4 L8 5.5" stroke="#2a2ab0" stroke-width="1.6"/></svg>
<svg class="a" style="left:9.6px;top:378.1px" width="15" height="13.5" viewBox="0 0 15 13" preserveAspectRatio="none"><path d="M0.6 11.6 C5 11.6 6 9 7.4 7 C9 4.8 10 3.2 14.4 3 L14.4 7.4 C11.4 7.6 10.6 9 9.2 10.6 C7.8 12.4 6 13.2 0.6 13.2Z" fill="#f2f200" stroke="#4a4a10" stroke-width="1.1" stroke-linejoin="round"/><path d="M0.8 9 C4 8.8 5.4 7.6 6.8 5.6" fill="none" stroke="#55551a" stroke-width="1.2"/><circle cx="5" cy="1.8" r="1.6" fill="#2a2ab0"/><path d="M3 4.5 L8 5.5" stroke="#2a2ab0" stroke-width="1.4"/></svg>
<svg class="a" style="left:9.6px;top:398.2px" width="15" height="13.5" viewBox="0 0 15 13" preserveAspectRatio="none"><path d="M0.6 11.6 C5 11.6 6 9 7.4 7 C9 4.8 10 3.2 14.4 3 L14.4 7.4 C11.4 7.6 10.6 9 9.2 10.6 C7.8 12.4 6 13.2 0.6 13.2Z" fill="#f2f200" stroke="#4a4a10" stroke-width="1.1" stroke-linejoin="round"/><path d="M0.8 9 C4 8.8 5.4 7.6 6.8 5.6" fill="none" stroke="#55551a" stroke-width="1.2"/><path d="M2 1.5 C3 4 5 5 7.5 5" stroke="#5a5ab0" stroke-width="1.2" fill="none"/></svg>
<svg class="a" style="left:9.6px;top:423.2px" width="15" height="13.5" viewBox="0 0 15 13" preserveAspectRatio="none"><path d="M0.6 11.6 C5 11.6 6 9 7.4 7 C9 4.8 10 3.2 14.4 3 L14.4 7.4 C11.4 7.6 10.6 9 9.2 10.6 C7.8 12.4 6 13.2 0.6 13.2Z" fill="#f2f200" stroke="#4a4a10" stroke-width="1.1" stroke-linejoin="round"/><path d="M0.8 9 C4 8.8 5.4 7.6 6.8 5.6" fill="none" stroke="#55551a" stroke-width="1.2"/><path d="M3 1.5 L7 1 L6 5 L2.5 5Z" fill="#4a4ac0"/></svg>
<svg class="a" style="left:9.6px;top:443.2px" width="15" height="13.5" viewBox="0 0 15 13" preserveAspectRatio="none"><path d="M0.6 11.6 C5 11.6 6 9 7.4 7 C9 4.8 10 3.2 14.4 3 L14.4 7.4 C11.4 7.6 10.6 9 9.2 10.6 C7.8 12.4 6 13.2 0.6 13.2Z" fill="#f2f200" stroke="#4a4a10" stroke-width="1.1" stroke-linejoin="round"/><path d="M0.8 9 C4 8.8 5.4 7.6 6.8 5.6" fill="none" stroke="#55551a" stroke-width="1.2"/><path d="M2 0.8 L8 3.2 L2 5Z" fill="#2a2ab0"/><circle cx="3" cy="2" r="1" fill="#d03030"/></svg>
<svg class="a" style="left:9.6px;top:464.1px" width="15" height="13.5" viewBox="0 0 15 13" preserveAspectRatio="none"><path d="M0.6 11.6 C5 11.6 6 9 7.4 7 C9 4.8 10 3.2 14.4 3 L14.4 7.4 C11.4 7.6 10.6 9 9.2 10.6 C7.8 12.4 6 13.2 0.6 13.2Z" fill="#f2f200" stroke="#4a4a10" stroke-width="1.1" stroke-linejoin="round"/><path d="M0.8 9 C4 8.8 5.4 7.6 6.8 5.6" fill="none" stroke="#55551a" stroke-width="1.2"/><path d="M3 1 C2 3 3 5 6 5.5" stroke="#4a4ab0" stroke-width="1.3" fill="none"/></svg>
<svg class="a" style="left:9.6px;top:490.4px" width="15" height="13.5" viewBox="0 0 15 13" preserveAspectRatio="none"><path d="M0.8 9 L10 2 L14 1 L14.2 5 L5 12 L1 12.4Z" fill="#98981a" stroke="#55550c" stroke-width="1.2"/><path d="M1 9 L5 9 L5 12" fill="none" stroke="#55550c" stroke-width="1"/><path d="M5 9 L14 2.4" stroke="#d4d438" stroke-width="1.2"/></svg>
<svg class="a" style="left:9.8px;top:511.6px" width="14.4" height="11.4" viewBox="0 0 15 13" preserveAspectRatio="none"><path d="M1 1.4 H14 M1 11.6 H14" stroke="#dcdc2a" stroke-width="2.4"/><path d="M2 3.4 L6.6 9.6 M6.6 3.4 L2 9.6 M8.4 3.4 L13 9.6 M13 3.4 L8.4 9.6" stroke="#dcdc2a" stroke-width="2" fill="none"/></svg>
<div class="a" style="left:44.4px;top:107.4px;width:834.8px;height:2.2px;background:#efeee6;"></div>
<div class="a" style="left:47.8px;top:109.6px;width:831.4px;height:2.4px;background:#5a5a5a;"></div>
<div class="a" style="left:47.8px;top:109.6px;width:2.5px;height:361.0px;background:#5a5a5a;"></div>
<div class="a" style="left:876.8px;top:109.6px;width:2.4px;height:366.7px;background:#5a5a5a;"></div>
<div class="a" style="left:101.0px;top:473.6px;width:778.2px;height:2.7px;background:#5a5a5a;"></div>
<div class="a" style="left:50.2px;top:112.0px;width:826.6px;height:361.6px;background:#fff;"></div>
<div class="a" style="left:50.2px;top:112.0px;width:824.2px;height:21.0px;background:#cdcdcd;"></div>
<div class="a" style="left:50.2px;top:112.0px;width:21.8px;height:358.5px;background:#cdcdcd;"></div>
<div class="a" style="left:55.3px;top:117.8px;width:10.5px;height:10.5px;box-sizing:border-box;border:1px solid #a9a9a9;background:#d2d2d2"></div>
<svg class="a" style="left:0;top:0" width="948" height="697" viewBox="0 0 948 697"><defs><pattern id="gr" x="71.90" y="133.95" width="9.166" height="9.210" patternUnits="userSpaceOnUse"><rect x="0" y="0" width="1.5" height="9.210" fill="#ececec"/><rect x="0" y="0" width="9.166" height="1.5" fill="#ececec"/><rect x="-0.3" y="-0.3" width="2.1" height="2.1" fill="#cde5f6"/></pattern></defs><rect x="72.7" y="134.8" width="779.1" height="138.1" fill="url(#gr)"/><rect x="72.00" y="119.0" width="1.4" height="14.0" fill="#444"/><rect x="71.50" y="133.6" width="2.6" height="2.2" fill="#ff5cb8"/><rect x="81.17" y="128.6" width="1.4" height="4.4" fill="#444"/><rect x="80.67" y="133.6" width="2.6" height="2.2" fill="#ff5cb8"/><rect x="90.33" y="128.6" width="1.4" height="4.4" fill="#444"/><rect x="89.83" y="133.6" width="2.6" height="2.2" fill="#ff5cb8"/><rect x="99.50" y="128.6" width="1.4" height="4.4" fill="#444"/><rect x="99.00" y="133.6" width="2.6" height="2.2" fill="#ff5cb8"/><rect x="108.66" y="128.6" width="1.4" height="4.4" fill="#444"/><rect x="108.16" y="133.6" width="2.6" height="2.2" fill="#ff5cb8"/><rect x="117.83" y="125.0" width="1.4" height="8.0" fill="#444"/><rect x="117.33" y="133.6" width="2.6" height="2.2" fill="#ff5cb8"/><rect x="127.00" y="128.6" width="1.4" height="4.4" fill="#444"/><rect x="126.50" y="133.6" width="2.6" height="2.2" fill="#ff5cb8"/><rect x="136.16" y="128.6" width="1.4" height="4.4" fill="#444"/><rect x="135.66" y="133.6" width="2.6" height="2.2" fill="#ff5cb8"/><rect x="145.33" y="128.6" width="1.4" height="4.4" fill="#444"/><rect x="144.83" y="133.6" width="2.6" height="2.2" fill="#ff5cb8"/><rect x="154.49" y="128.6" width="1.4" height="4.4" fill="#444"/><rect x="153.99" y="133.6" width="2.6" height="2.2" fill="#ff5cb8"/><rect x="163.66" y="119.0" width="1.4" height="14.0" fill="#444"/><rect x="163.16" y="133.6" width="2.6" height="2.2" fill="#ff5cb8"/><rect x="172.83" y="128.6" width="1.4" height="4.4" fill="#444"/><rect x="172.33" y="133.6" width="2.6" height="2.2" fill="#ff5cb8"/><rect x="181.99" y="128.6" width="1.4" height="4.4" fill="#444"/><rect x="181.49" y="133.6" width="2.6" height="2.2" fill="#ff5cb8"/><rect x="191.16" y="128.6" width="1.4" height="4.4" fill="#444"/><rect x="190.66" y="133.6" width="2.6" height="2.2" fill="#ff5cb8"/><rect x="200.32" y="128.6" width="1.4" height="4.4" fill="#444"/><rect x="199.82" y="133.6" width="2.6" height="2.2" fill="#ff5cb8"/><rect x="209.49" y="125.0" width="1.4" height="8.0" fill="#444"/><rect x="208.99" y="133.6" width="2.6" height="2.2" fill="#ff5cb8"/><rect x="218.66" y="128.6" width="1.4" height="4.4" fill="#444"/><rect x="218.16" y="133.6" width="2.6" height="2.2" fill="#ff5cb8"/><rect x="227.82" y="128.6" width="1.4" height="4.4" fill="#444"/><rect x="227.32" y="133.6" width="2.6" height="2.2" fill="#ff5cb8"/><rect x="236.99" y="128.6" width="1.4" height="4.4" fill="#444"/><rect x="236.49" y="133.6" width="2.6" height="2.2" fill="#ff5cb8"/><rect x="246.15" y="128.6" width="1.4" height="4.4" fill="#444"/><rect x="245.65" y="133.6" width="2.6" height="2.2" fill="#ff5cb8"/><rect x="255.32" y="119.0" width="1.4" height="14.0" fill="#444"/><rect x="254.82" y="133.6" width="2.6" height="2.2" fill="#ff5cb8"/><rect x="264.49" y="128.6" width="1.4" height="4.4" fill="#444"/><rect x="263.99" y="133.6" width="2.6" height="2.2" fill="#ff5cb8"/><rect x="273.65" y="128.6" width="1.4" height="4.4" fill="#444"/><rect x="273.15" y="133.6" width="2.6" height="2.2" fill="#ff5cb8"/><rect x="282.82" y="128.6" width="1.4" height="4.4" fill="#444"/><rect x="282.32" y="133.6" width="2.6" height="2.2" fill="#ff5cb8"/><rect x="291.98" y="128.6" width="1.4" height="4.4" fill="#444"/><rect x="291.48" y="133.6" width="2.6" height="2.2" fill="#ff5cb8"/><rect x="301.15" y="125.0" width="1.4" height="8.0" fill="#444"/><rect x="300.65" y="133.6" width="2.6" height="2.2" fill="#ff5cb8"/><rect x="310.32" y="128.6" width="1.4" height="4.4" fill="#444"/><rect x="309.82" y="133.6" width="2.6" height="2.2" fill="#ff5cb8"/><rect x="319.48" y="128.6" width="1.4" height="4.4" fill="#444"/><rect x="318.98" y="133.6" width="2.6" height="2.2" fill="#ff5cb8"/><rect x="328.65" y="128.6" width="1.4" height="4.4" fill="#444"/><rect x="328.15" y="133.6" width="2.6" height="2.2" fill="#ff5cb8"/><rect x="337.81" y="128.6" width="1.4" height="4.4" fill="#444"/><rect x="337.31" y="133.6" width="2.6" height="2.2" fill="#ff5cb8"/><rect x="346.98" y="119.0" width="1.4" height="14.0" fill="#444"/><rect x="346.48" y="133.6" width="2.6" height="2.2" fill="#ff5cb8"/><rect x="356.15" y="128.6" width="1.4" height="4.4" fill="#444"/><rect x="355.65" y="133.6" width="2.6" height="2.2" fill="#ff5cb8"/><rect x="365.31" y="128.6" width="1.4" height="4.4" fill="#444"/><rect x="364.81" y="133.6" width="2.6" height="2.2" fill="#ff5cb8"/><rect x="374.48" y="128.6" width="1.4" height="4.4" fill="#444"/><rect x="373.98" y="133.6" width="2.6" height="2.2" fill="#ff5cb8"/><rect x="383.64" y="128.6" width="1.4" height="4.4" fill="#444"/><rect x="383.14" y="133.6" width="2.6" height="2.2" fill="#ff5cb8"/><rect x="392.81" y="125.0" width="1.4" height="8.0" fill="#444"/><rect x="392.31" y="133.6" width="2.6" height="2.2" fill="#ff5cb8"/><rect x="401.98" y="128.6" width="1.4" height="4.4" fill="#444"/><rect x="401.48" y="133.6" width="2.6" height="2.2" fill="#ff5cb8"/><rect x="411.14" y="128.6" width="1.4" height="4.4" fill="#444"/><rect x="410.64" y="133.6" width="2.6" height="2.2" fill="#ff5cb8"/><rect x="420.31" y="128.6" width="1.4" height="4.4" fill="#444"/><rect x="419.81" y="133.6" width="2.6" height="2.2" fill="#ff5cb8"/><rect x="429.47" y="128.6" width="1.4" height="4.4" fill="#444"/><rect x="428.97" y="133.6" width="2.6" height="2.2" fill="#ff5cb8"/><rect x="438.64" y="119.0" width="1.4" height="14.0" fill="#444"/><rect x="438.14" y="133.6" width="2.6" height="2.2" fill="#ff5cb8"/><rect x="447.81" y="128.6" width="1.4" height="4.4" fill="#444"/><rect x="447.31" y="133.6" width="2.6" height="2.2" fill="#ff5cb8"/><rect x="456.97" y="128.6" width="1.4" height="4.4" fill="#444"/><rect x="456.47" y="133.6" width="2.6" height="2.2" fill="#ff5cb8"/><rect x="466.14" y="128.6" width="1.4" height="4.4" fill="#444"/><rect x="465.64" y="133.6" width="2.6" height="2.2" fill="#ff5cb8"/><rect x="475.30" y="128.6" width="1.4" height="4.4" fill="#444"/><rect x="474.80" y="133.6" width="2.6" height="2.2" fill="#ff5cb8"/><rect x="484.47" y="125.0" width="1.4" height="8.0" fill="#444"/><rect x="483.97" y="133.6" width="2.6" height="2.2" fill="#ff5cb8"/><rect x="493.64" y="128.6" width="1.4" height="4.4" fill="#444"/><rect x="493.14" y="133.6" width="2.6" height="2.2" fill="#ff5cb8"/><rect x="502.80" y="128.6" width="1.4" height="4.4" fill="#444"/><rect x="502.30" y="133.6" width="2.6" height="2.2" fill="#ff5cb8"/><rect x="511.97" y="128.6" width="1.4" height="4.4" fill="#444"/><rect x="511.47" y="133.6" width="2.6" height="2.2" fill="#ff5cb8"/><rect x="521.13" y="128.6" width="1.4" height="4.4" fill="#444"/><rect x="520.63" y="133.6" width="2.6" height="2.2" fill="#ff5cb8"/><rect x="530.30" y="119.0" width="1.4" height="14.0" fill="#444"/><rect x="529.80" y="133.6" width="2.6" height="2.2" fill="#ff5cb8"/><rect x="539.47" y="128.6" width="1.4" height="4.4" fill="#444"/><rect x="538.97" y="133.6" width="2.6" height="2.2" fill="#ff5cb8"/><rect x="548.63" y="128.6" width="1.4" height="4.4" fill="#444"/><rect x="548.13" y="133.6" width="2.6" height="2.2" fill="#ff5cb8"/><rect x="557.80" y="128.6" width="1.4" height="4.4" fill="#444"/><rect x="557.30" y="133.6" width="2.6" height="2.2" fill="#ff5cb8"/><rect x="566.96" y="128.6" width="1.4" height="4.4" fill="#444"/><rect x="566.46" y="133.6" width="2.6" height="2.2" fill="#ff5cb8"/><rect x="576.13" y="125.0" width="1.4" height="8.0" fill="#444"/><rect x="575.63" y="133.6" width="2.6" height="2.2" fill="#ff5cb8"/><rect x="585.30" y="128.6" width="1.4" height="4.4" fill="#444"/><rect x="584.80" y="133.6" width="2.6" height="2.2" fill="#ff5cb8"/><rect x="594.46" y="128.6" width="1.4" height="4.4" fill="#444"/><rect x="593.96" y="133.6" width="2.6" height="2.2" fill="#ff5cb8"/><rect x="603.63" y="128.6" width="1.4" height="4.4" fill="#444"/><rect x="603.13" y="133.6" width="2.6" height="2.2" fill="#ff5cb8"/><rect x="612.79" y="128.6" width="1.4" height="4.4" fill="#444"/><rect x="612.29" y="133.6" width="2.6" height="2.2" fill="#ff5cb8"/><rect x="621.96" y="119.0" width="1.4" height="14.0" fill="#444"/><rect x="621.46" y="133.6" width="2.6" height="2.2" fill="#ff5cb8"/><rect x="631.13" y="128.6" width="1.4" height="4.4" fill="#444"/><rect x="630.63" y="133.6" width="2.6" height="2.2" fill="#ff5cb8"/><rect x="640.29" y="128.6" width="1.4" height="4.4" fill="#444"/><rect x="639.79" y="133.6" width="2.6" height="2.2" fill="#ff5cb8"/><rect x="649.46" y="128.6" width="1.4" height="4.4" fill="#444"/><rect x="648.96" y="133.6" width="2.6" height="2.2" fill="#ff5cb8"/><rect x="658.62" y="128.6" width="1.4" height="4.4" fill="#444"/><rect x="658.12" y="133.6" width="2.6" height="2.2" fill="#ff5cb8"/><rect x="667.79" y="125.0" width="1.4" height="8.0" fill="#444"/><rect x="667.29" y="133.6" width="2.6" height="2.2" fill="#ff5cb8"/><rect x="676.96" y="128.6" width="1.4" height="4.4" fill="#444"/><rect x="676.46" y="133.6" width="2.6" height="2.2" fill="#ff5cb8"/><rect x="686.12" y="128.6" width="1.4" height="4.4" fill="#444"/><rect x="685.62" y="133.6" width="2.6" height="2.2" fill="#ff5cb8"/><rect x="695.29" y="128.6" width="1.4" height="4.4" fill="#444"/><rect x="694.79" y="133.6" width="2.6" height="2.2" fill="#ff5cb8"/><rect x="704.45" y="128.6" width="1.4" height="4.4" fill="#444"/><rect x="703.95" y="133.6" width="2.6" height="2.2" fill="#ff5cb8"/><rect x="713.62" y="119.0" width="1.4" height="14.0" fill="#444"/><rect x="713.12" y="133.6" width="2.6" height="2.2" fill="#ff5cb8"/><rect x="722.79" y="128.6" width="1.4" height="4.4" fill="#444"/><rect x="722.29" y="133.6" width="2.6" height="2.2" fill="#ff5cb8"/><rect x="731.95" y="128.6" width="1.4" height="4.4" fill="#444"/><rect x="731.45" y="133.6" width="2.6" height="2.2" fill="#ff5cb8"/><rect x="741.12" y="128.6" width="1.4" height="4.4" fill="#444"/><rect x="740.62" y="133.6" width="2.6" height="2.2" fill="#ff5cb8"/><rect x="750.28" y="128.6" width="1.4" height="4.4" fill="#444"/><rect x="749.78" y="133.6" width="2.6" height="2.2" fill="#ff5cb8"/><rect x="759.45" y="125.0" width="1.4" height="8.0" fill="#444"/><rect x="758.95" y="133.6" width="2.6" height="2.2" fill="#ff5cb8"/><rect x="768.62" y="128.6" width="1.4" height="4.4" fill="#444"/><rect x="768.12" y="133.6" width="2.6" height="2.2" fill="#ff5cb8"/><rect x="777.78" y="128.6" width="1.4" height="4.4" fill="#444"/><rect x="777.28" y="133.6" width="2.6" height="2.2" fill="#ff5cb8"/><rect x="786.95" y="128.6" width="1.4" height="4.4" fill="#444"/><rect x="786.45" y="133.6" width="2.6" height="2.2" fill="#ff5cb8"/><rect x="796.11" y="128.6" width="1.4" height="4.4" fill="#444"/><rect x="795.61" y="133.6" width="2.6" height="2.2" fill="#ff5cb8"/><rect x="805.28" y="119.0" width="1.4" height="14.0" fill="#444"/><rect x="804.78" y="133.6" width="2.6" height="2.2" fill="#ff5cb8"/><rect x="814.45" y="128.6" width="1.4" height="4.4" fill="#444"/><rect x="813.95" y="133.6" width="2.6" height="2.2" fill="#ff5cb8"/><rect x="823.61" y="128.6" width="1.4" height="4.4" fill="#444"/><rect x="823.11" y="133.6" width="2.6" height="2.2" fill="#ff5cb8"/><rect x="832.78" y="128.6" width="1.4" height="4.4" fill="#444"/><rect x="832.28" y="133.6" width="2.6" height="2.2" fill="#ff5cb8"/><rect x="841.94" y="128.6" width="1.4" height="4.4" fill="#444"/><rect x="841.44" y="133.6" width="2.6" height="2.2" fill="#ff5cb8"/><rect x="851.11" y="125.0" width="1.4" height="8.0" fill="#444"/><rect x="850.61" y="133.6" width="2.6" height="2.2" fill="#ff5cb8"/><rect x="851.06" y="114.0" width="1.5" height="1.5" fill="#444"/><rect x="851.06" y="117.0" width="1.5" height="1.5" fill="#444"/><rect x="851.06" y="120.0" width="1.5" height="1.5" fill="#444"/><rect x="63.0" y="410.35" width="8.2" height="1.4" fill="#444"/><rect x="65.3" y="401.14" width="5.9" height="1.4" fill="#444"/><rect x="65.3" y="391.93" width="5.9" height="1.4" fill="#444"/><rect x="65.3" y="382.72" width="5.9" height="1.4" fill="#444"/><rect x="65.3" y="373.51" width="5.9" height="1.4" fill="#444"/><rect x="56.0" y="364.30" width="15.2" height="1.4" fill="#444"/><rect x="65.3" y="355.09" width="5.9" height="1.4" fill="#444"/><rect x="65.3" y="345.88" width="5.9" height="1.4" fill="#444"/><rect x="65.3" y="336.67" width="5.9" height="1.4" fill="#444"/><rect x="65.3" y="327.46" width="5.9" height="1.4" fill="#444"/><rect x="63.0" y="318.25" width="8.2" height="1.4" fill="#444"/><rect x="65.3" y="309.04" width="5.9" height="1.4" fill="#444"/><rect x="65.3" y="299.83" width="5.9" height="1.4" fill="#444"/><rect x="65.3" y="290.62" width="5.9" height="1.4" fill="#444"/><rect x="65.3" y="281.41" width="5.9" height="1.4" fill="#444"/><rect x="56.0" y="272.20" width="15.2" height="1.4" fill="#444"/><rect x="65.3" y="262.99" width="5.9" height="1.4" fill="#444"/><rect x="65.3" y="253.78" width="5.9" height="1.4" fill="#444"/><rect x="65.3" y="244.57" width="5.9" height="1.4" fill="#444"/><rect x="65.3" y="235.36" width="5.9" height="1.4" fill="#444"/><rect x="63.0" y="226.15" width="8.2" height="1.4" fill="#444"/><rect x="65.3" y="216.94" width="5.9" height="1.4" fill="#444"/><rect x="65.3" y="207.73" width="5.9" height="1.4" fill="#444"/><rect x="65.3" y="198.52" width="5.9" height="1.4" fill="#444"/><rect x="65.3" y="189.31" width="5.9" height="1.4" fill="#444"/><rect x="56.0" y="180.10" width="15.2" height="1.4" fill="#444"/><rect x="65.3" y="170.89" width="5.9" height="1.4" fill="#444"/><rect x="65.3" y="161.68" width="5.9" height="1.4" fill="#444"/><rect x="65.3" y="152.47" width="5.9" height="1.4" fill="#444"/><rect x="65.3" y="143.26" width="5.9" height="1.4" fill="#444"/><rect x="63.0" y="134.05" width="8.2" height="1.4" fill="#444"/><rect x="72.7" y="133" width="779.1" height="1.2" fill="#c8d878"/><text x="74.3" y="125.6" font-family="Liberation Sans, sans-serif" font-size="9.5" fill="#222" textLength="25.5" lengthAdjust="spacingAndGlyphs">0.000</text><text x="166.0" y="125.6" font-family="Liberation Sans, sans-serif" font-size="9.5" fill="#222" textLength="25.5" lengthAdjust="spacingAndGlyphs">1.000</text><text x="257.6" y="125.6" font-family="Liberation Sans, sans-serif" font-size="9.5" fill="#222" textLength="25.5" lengthAdjust="spacingAndGlyphs">2.000</text><text x="349.3" y="125.6" font-family="Liberation Sans, sans-serif" font-size="9.5" fill="#222" textLength="25.5" lengthAdjust="spacingAndGlyphs">3.000</text><text x="440.9" y="125.6" font-family="Liberation Sans, sans-serif" font-size="9.5" fill="#222" textLength="25.5" lengthAdjust="spacingAndGlyphs">4.000</text><text x="532.6" y="125.6" font-family="Liberation Sans, sans-serif" font-size="9.5" fill="#222" textLength="25.5" lengthAdjust="spacingAndGlyphs">5.000</text><text x="624.3" y="125.6" font-family="Liberation Sans, sans-serif" font-size="9.5" fill="#222" textLength="25.5" lengthAdjust="spacingAndGlyphs">6.000</text><text x="715.9" y="125.6" font-family="Liberation Sans, sans-serif" font-size="9.5" fill="#222" textLength="25.5" lengthAdjust="spacingAndGlyphs">7.000</text><text x="807.6" y="125.6" font-family="Liberation Sans, sans-serif" font-size="9.5" fill="#222" textLength="25.5" lengthAdjust="spacingAndGlyphs">8.000</text><text transform="translate(61.3 179.3) rotate(-90)" font-family="Liberation Sans, sans-serif" font-size="10" fill="#222" textLength="31" lengthAdjust="spacingAndGlyphs">1.000</text><text transform="translate(61.3 271.4) rotate(-90)" font-family="Liberation Sans, sans-serif" font-size="10" fill="#222" textLength="25.5" lengthAdjust="spacingAndGlyphs">0.000</text><text transform="translate(61.3 363.5) rotate(-90)" font-family="Liberation Sans, sans-serif" font-size="10" fill="#222" textLength="29" lengthAdjust="spacingAndGlyphs">-1.000</text><rect x="71.7" y="134.8" width="2.2" height="138.1" fill="#a9a9de"/><rect x="850.8" y="134.8" width="2.2" height="138.1" fill="#ff7a86"/><rect x="71.7" y="271.8" width="780.9" height="139.6" fill="#6666cc"/><rect x="71.7" y="271.8" width="2.4" height="139.6" fill="#3a3acc"/><rect x="851.0" y="271.8" width="1.6" height="139.6" fill="#4545cc"/><rect x="117.3" y="262.7" width="47.7" height="10" fill="#5656cc"/><rect x="119.9" y="265.2" width="42.5" height="6" fill="#a6caf0"/><rect x="72.7" y="223.2" width="779.9" height="6.6" fill="#ff0000"/><line x1="73.7" y1="226.5" x2="851.8" y2="226.5" stroke="#7a0000" stroke-width="2.4" stroke-dasharray="2.6 2.6"/><path d="M52.5 222.5 L60 226.5 L63 226.5 L56 231 L56.5 227.5Z" fill="#222"/><path d="M459 230 L463.4 230 L463.4 236.6 L466.3 236.6 L461.2 242.4 L456.2 236.6 L459 236.6Z" fill="#0ad80a"/></svg>
<div class="a" style="left:0.0px;top:95.5px;width:948.0px;height:1.8px;background:#c3c3c3;"></div>
<div class="a" style="left:0.0px;top:98.7px;width:948.0px;height:2.6px;background:#ececec;"></div>
<div class="a" style="left:880.7px;top:107.0px;width:2.9px;height:391.0px;background:#a8a8a8;"></div>
<div class="a" style="left:883.6px;top:107.0px;width:2.9px;height:391.0px;background:#fbfbf8;"></div>
<div class="a" style="left:886.6px;top:107.0px;width:2.6px;height:391.0px;background:#5a5a5a;"></div>
<div class="a" style="left:889.2px;top:109.0px;width:1.8px;height:389.0px;background:#f7f6ee;"></div>
<div class="a" style="left:889.0px;top:107.0px;width:45.0px;height:2.0px;background:#bdbdbd;"></div>
<div class="a" style="left:932.2px;top:107.0px;width:2.0px;height:396.0px;background:#f7f6ee;"></div>
<div class="a" style="left:934.2px;top:104.0px;width:2.6px;height:401.2px;background:#5a5a5a;"></div>
<div class="a" style="left:894.5px;top:116.0px;width:31.5px;height:1.8px;background:#f2f2f2;"></div>
<div class="a" style="left:894.5px;top:119.6px;width:31.5px;height:1.8px;background:#a4a4a4;"></div>
<div class="a" style="left:924.3px;top:116.0px;width:1.7px;height:5.4px;background:#8a8a8a;"></div>
<div class="a" style="left:898.2px;top:139.7px;width:22.2px;height:1.3px;background:#f7f6ee;"></div>
<div class="a" style="left:898.2px;top:139.7px;width:1.1px;height:340.3px;background:#f7f6ee;"></div>
<div class="a" style="left:899.3px;top:141.0px;width:21.1px;height:84.7px;background:#3333cc;"></div>
<div class="a" style="left:899.3px;top:225.7px;width:21.1px;height:84.7px;background:#6666cc;"></div>
<div class="a" style="left:899.3px;top:310.4px;width:21.1px;height:84.8px;background:#a6caf0;"></div>
<div class="a" style="left:899.3px;top:395.2px;width:21.1px;height:84.8px;background:#ccccff;"></div>
<div class="a" style="left:889.2px;top:498.0px;width:43.8px;height:1.6px;background:#e6e6e6;"></div>
<div class="a" style="left:128.0px;top:502.8px;width:808.6px;height:2.5px;background:#5a5a5a;"></div>
<div class="a" style="left:128.0px;top:505.3px;width:808.6px;height:1.5px;background:#f7f6ee;"></div>
<div class="a" style="left:101.0px;top:476.3px;width:280.0px;height:18.3px;background:#d9d9d9;"></div>
<div class="a" style="left:101.0px;top:491.8px;width:278.0px;height:2.8px;background:#5a5a5a;"></div>
<div class="a" style="left:193.6px;top:476.3px;width:2.8px;height:17.9px;background:#5a5a5a;"></div>
<div class="a" style="left:289.7px;top:476.3px;width:2.8px;height:17.9px;background:#5a5a5a;"></div>
<div class="a" style="left:340.3px;top:476.3px;width:2.8px;height:17.9px;background:#5a5a5a;"></div>
<div class="a" style="left:378.2px;top:476.3px;width:2.8px;height:17.9px;background:#5a5a5a;"></div>
<div class="a" style="left:102.8px;top:477.0px;width:1.5px;height:14.8px;background:#f6f6f0;"></div>
<div class="a" style="left:196.5px;top:477.0px;width:1.5px;height:14.8px;background:#f6f6f0;"></div>
<div class="a" style="left:292.6px;top:477.0px;width:1.5px;height:14.8px;background:#f6f6f0;"></div>
<div class="a" style="left:343.2px;top:477.0px;width:1.5px;height:14.8px;background:#f6f6f0;"></div>
<div class="a" style="left:102.8px;top:476.3px;width:275.2px;height:1.5px;background:#eeeee8;"></div>
<div class="a" style="left:54.8px;top:471.6px;width:45.2px;height:25.4px;background:#dddddd;"></div>
<div class="a" style="left:54.8px;top:471.6px;width:1.4px;height:23.4px;background:#f7f6ee;"></div>
<div class="a" style="left:54.8px;top:471.6px;width:45.2px;height:1.2px;background:#eeeeee;"></div>
<div class="a" style="left:100.0px;top:474.8px;width:2.8px;height:22.2px;background:#5a5a5a;"></div>
<div class="a" style="left:56.0px;top:494.8px;width:46.8px;height:2.6px;background:#5a5a5a;"></div>
<div class="a" style="left:56.2px;top:492.8px;width:43.8px;height:2.0px;background:#efeee2;"></div>
<span class="a" style="left:58.5px;top:479.2px;font-size:9.5px;line-height:12px;letter-spacing:0.19px;white-space:nowrap;color:#000;-webkit-text-stroke:0.3px #000;font-weight:bold;">Layout</span>
<div class="a" style="left:102.8px;top:477.6px;width:73.2px;height:14.2px;background:#ecebe2;"></div>
<span class="a" style="left:102.8px;top:478.2px;font-size:10.5px;line-height:14px;letter-spacing:0.00px;white-space:nowrap;color:#000;-webkit-text-stroke:0.15px #000;transform:scaleX(0.8300);transform-origin:0 50%;">2D Refr_Idx-Re(y)</span>
<span class="a" style="left:199.5px;top:478.2px;font-size:10.5px;line-height:14px;letter-spacing:0.00px;white-space:nowrap;color:#000;-webkit-text-stroke:0.15px #000;transform:scaleX(0.8276);transform-origin:0 50%;">3D Refr_Idx-Re(y)</span>
<span class="a" style="left:296.5px;top:478.2px;font-size:10.5px;line-height:14px;letter-spacing:0.00px;white-space:nowrap;color:#000;-webkit-text-stroke:0.15px #000;transform:scaleX(0.7711);transform-origin:0 50%;">Scripting</span>
<span class="a" style="left:347.0px;top:478.2px;font-size:10.5px;line-height:14px;letter-spacing:0.00px;white-space:nowrap;color:#000;-webkit-text-stroke:0.15px #000;transform:scaleX(0.7656);transform-origin:0 50%;">Notes</span>
<div class="a" style="left:45.8px;top:473.8px;width:7.4px;height:2.4px;background:#666;"></div>
<div class="a" style="left:44.8px;top:503.0px;width:83.2px;height:23.0px;background:#d9d9d9;"></div>
<div class="a" style="left:44.8px;top:504.0px;width:1.4px;height:19.0px;background:#f7f6ee;"></div>
<div class="a" style="left:44.8px;top:503.0px;width:83.2px;height:1.3px;background:#f7f6ee;"></div>
<div class="a" style="left:126.0px;top:504.0px;width:2.6px;height:22.4px;background:#3c3c3c;"></div>
<div class="a" style="left:46.0px;top:523.8px;width:82.6px;height:2.6px;background:#3c3c3c;"></div>
<div class="a" style="left:40.0px;top:502.2px;width:5.0px;height:1.4px;background:#777;"></div>
<svg class="a" style="left:46px;top:507px" width="13" height="13.6" viewBox="0 0 13 13.6"><rect width="13" height="13.6" fill="#4a96e4"/><rect x="0" y="0" width="13" height="2.6" fill="#8cc0f2"/><circle cx="6" cy="7.2" r="3" fill="none" stroke="#f4f8ff" stroke-width="1.8"/><path d="M7.6 9 L11 12" stroke="#f4f8ff" stroke-width="1.8"/></svg>
<span class="a" style="left:62.2px;top:506.6px;font-size:12px;line-height:16px;letter-spacing:0.00px;white-space:nowrap;color:#2a2a2a;-webkit-text-stroke:0px #2a2a2a;transform:scaleX(0.7962);transform-origin:0 50%;">Sample_2D_...</span>
<div class="a" style="left:31.0px;top:529.0px;width:917.0px;height:3.2px;background:#f0efe2;"></div>
<div class="a" style="left:31.0px;top:532.8px;width:917.0px;height:3.4px;background:#6e6e6e;"></div>
<div class="a" style="left:36.0px;top:537.5px;width:912.0px;height:2.0px;background:#ececec;"></div>
<div class="a" style="left:38.6px;top:538.0px;width:1.8px;height:127.4px;background:#f2f2f0;"></div>
<div class="a" style="left:41.2px;top:538.0px;width:1.8px;height:127.4px;background:#b8b8b8;"></div>
<div class="a" style="left:43.6px;top:538.0px;width:1.8px;height:127.4px;background:#f2f2f0;"></div>
<div class="a" style="left:46.2px;top:538.0px;width:1.8px;height:127.4px;background:#b8b8b8;"></div>
<div class="a" style="left:50.8px;top:541.0px;width:3.4px;height:103.0px;background:#f4f4f2;"></div>
<div class="a" style="left:55.8px;top:542.3px;width:876.2px;height:100.9px;background:#8e8e8e;"></div>
<div class="a" style="left:58.4px;top:544.4px;width:873.6px;height:98.8px;background:#fbfbf8;"></div>
<div class="a" style="left:58.4px;top:544.4px;width:870.8px;height:95.4px;background:#cdcdcd;"></div>
<div class="a" style="left:932.0px;top:537.5px;width:2.8px;height:109.1px;background:#4a4a4a;"></div>
<span class="a" style="left:59.8px;top:545.1px;font-size:10px;line-height:13px;letter-spacing:-0.11px;white-space:nowrap;color:#000;-webkit-text-stroke:0.15px #000;">Warning: Running of Script will clear Undo and Redo stacks</span>
<div class="a" style="left:124.0px;top:643.2px;width:810.8px;height:3.4px;background:#4a4a4a;"></div>
<div class="a" style="left:63.3px;top:644.0px;width:60.7px;height:23.0px;background:#dadada;"></div>
<div class="a" style="left:63.3px;top:644.0px;width:1.5px;height:21.0px;background:#f7f6ee;"></div>
<div class="a" style="left:121.4px;top:646.0px;width:2.6px;height:21.0px;background:#5a5a5a;"></div>
<div class="a" style="left:65.0px;top:664.2px;width:59.0px;height:2.8px;background:#5a5a5a;"></div>
<div class="a" style="left:56.0px;top:645.6px;width:6.0px;height:1.4px;background:#777;"></div>
<div class="a" style="left:125.3px;top:646.8px;width:32.9px;height:18.2px;background:#d9d9d9;"></div>
<div class="a" style="left:125.6px;top:647.0px;width:1.4px;height:16.0px;background:#f7f6ee;"></div>
<div class="a" style="left:155.6px;top:647.0px;width:2.6px;height:18.4px;background:#5a5a5a;"></div>
<div class="a" style="left:127.0px;top:662.8px;width:31.2px;height:2.6px;background:#5a5a5a;"></div>
<span class="a" style="left:67.8px;top:650.5px;font-size:9.5px;line-height:12px;letter-spacing:-0.13px;white-space:nowrap;color:#000;-webkit-text-stroke:0.3px #000;font-weight:bold;">Notification</span>
<span class="a" style="left:129.6px;top:649.5px;font-size:10.5px;line-height:14px;letter-spacing:0.00px;white-space:nowrap;color:#000;-webkit-text-stroke:0.15px #000;transform:scaleX(0.7886);transform-origin:0 50%;">Error</span>
<div class="a" style="left:32.0px;top:669.2px;width:916.0px;height:1.6px;background:#c0c0c0;"></div>
<div class="a" style="left:32.0px;top:672.0px;width:916.0px;height:1.6px;background:#ececec;"></div>
<div class="a" style="left:0.0px;top:685.6px;width:31.5px;height:2.0px;background:#bcbcbc;"></div>
<span class="a" style="left:33.4px;top:674.9px;font-size:9.5px;line-height:12px;letter-spacing:0.13px;white-space:nowrap;color:#222;-webkit-text-stroke:0.15px #222;">Ready</span>
<div class="a" style="left:662.0px;top:673.6px;width:96.6px;height:14.4px;background:#f4f4f0;"></div>
<div class="a" style="left:662.0px;top:673.6px;width:95.2px;height:13.0px;background:#8f8f8f;"></div>
<div class="a" style="left:663.4px;top:675.0px;width:93.8px;height:11.6px;background:#d7d7d7;"></div>
<div class="a" style="left:761.8px;top:673.6px;width:95.9px;height:14.4px;background:#f4f4f0;"></div>
<div class="a" style="left:761.8px;top:673.6px;width:94.5px;height:13.0px;background:#8f8f8f;"></div>
<div class="a" style="left:763.2px;top:675.0px;width:93.1px;height:11.6px;background:#d7d7d7;"></div>
<div class="a" style="left:861.0px;top:673.6px;width:22.0px;height:14.4px;background:#f4f4f0;"></div>
<div class="a" style="left:861.0px;top:673.6px;width:20.6px;height:13.0px;background:#8f8f8f;"></div>
<div class="a" style="left:862.4px;top:675.0px;width:19.2px;height:11.6px;background:#d7d7d7;"></div>
<div class="a" style="left:887.0px;top:673.6px;width:23.0px;height:14.4px;background:#f4f4f0;"></div>
<div class="a" style="left:887.0px;top:673.6px;width:21.6px;height:13.0px;background:#8f8f8f;"></div>
<div class="a" style="left:888.4px;top:675.0px;width:20.2px;height:11.6px;background:#d7d7d7;"></div>
<div class="a" style="left:914.5px;top:673.6px;width:26.0px;height:14.4px;background:#f4f4f0;"></div>
<div class="a" style="left:914.5px;top:673.6px;width:24.6px;height:13.0px;background:#8f8f8f;"></div>
<div class="a" style="left:915.9px;top:675.0px;width:23.2px;height:11.6px;background:#d7d7d7;"></div>
<span class="a" style="left:663.5px;top:674.5px;font-size:10px;line-height:13px;letter-spacing:0.17px;white-space:nowrap;color:#000;-webkit-text-stroke:0.15px #000;">8.500000</span>
<span class="a" style="left:763.4px;top:674.5px;font-size:10px;line-height:13px;letter-spacing:-0.01px;white-space:nowrap;color:#000;-webkit-text-stroke:0.15px #000;">1.360000</span>
<div class="a" style="left:0.0px;top:689.2px;width:948.0px;height:2.5px;background:#e8e8e8;"></div>
</div>
<div class="a" style="left:0;top:0;width:948px;height:6px;background:#fff"></div><div class="a" style="left:0;top:691.6px;width:948px;height:6px;background:#fff"></div><div class="a" style="left:0;top:0;width:4px;height:697px;background:#fff"></div><div class="a" style="left:943px;top:0;width:5px;height:697px;background:#fff"></div>
</body>
</html>
